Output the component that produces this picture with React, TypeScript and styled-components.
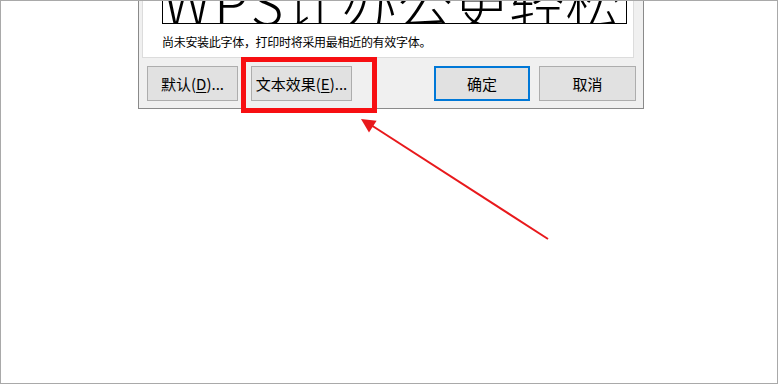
import React from "react";
import styled, { createGlobalStyle } from "styled-components";

const GlobalStyle = createGlobalStyle`
  html, body { margin: 0; padding: 0; background: #ffffff; }
  * { box-sizing: border-box; }
`;

const Page = styled.div`
  position: relative;
  width: 778px;
  height: 384px;
  border: 1px solid #a9a9a9;
  background: #ffffff;
  overflow: hidden;
  padding-left: 137px;
  font-family: "Noto Sans CJK SC", "Noto Sans", sans-serif;
`;

const Dialog = styled.div`
  width: 506px;
  background: #f0f0f0;
  border: 1px solid #8a8a8a;
  border-top: none;
  padding: 0 1px 7px 3px;
  display: flex;
  flex-direction: column;
`;

const FontPanel = styled.div`
  background: #ffffff;
  border: 1px solid #dcdcdc;
  border-top: none;
  width: 492px;
  padding: 0 6px 6px 19px;
`;

const Preview = styled.div`
  height: 23px;
  border: 1px solid #000000;
  border-top: none;
  overflow: hidden;
  display: flex;
  align-items: flex-end;
`;

const PreviewText = styled.span`
  font-family: "Noto Sans CJK SC", sans-serif;
  font-weight: 300;
  font-size: 56px;
  line-height: 56px;
  margin-bottom: -6px;
  white-space: pre;
  color: #000000;
`;

const Latin = styled.span`
  display: inline-block;
  width: 122px;
  letter-spacing: 3px;
`;

const Note = styled.div`
  margin-top: 9px;
  font-size: 12px;
  letter-spacing: -0.3px;
  line-height: 18px;
  color: #000000;
  white-space: nowrap;
`;

const ButtonRow = styled.div`
  display: flex;
  align-items: center;
  padding: 8px 6px 0 5px;
`;

const Spacer = styled.div`
  flex: 1;
`;

const Button = styled.div<{ $w: number; $primary?: boolean; $gap?: number }>`
  width: ${(p) => p.$w}px;
  height: 35px;
  margin-left: ${(p) => p.$gap ?? 0}px;
  background: #e1e1e1;
  border: ${(p) => (p.$primary ? "2px solid #0078d7" : "1px solid #adadad")};
  display: flex;
  align-items: center;
  justify-content: center;
  font-size: 15px;
  color: #000000;
  white-space: nowrap;
  u { text-decoration: underline; text-underline-offset: 2px; }
`;

const Highlight = styled.div`
  position: absolute;
  left: 240px;
  top: 56px;
  width: 136px;
  height: 56px;
  border: 5px solid #f70f12;
`;

const Overlay = styled.svg`
  position: absolute;
  left: -1px;
  top: -1px;
  width: 778px;
  height: 384px;
  pointer-events: none;
`;

export default function App() {
  return (
    <>
      <GlobalStyle />
      <Page>
        <Dialog>
          <FontPanel>
            <Preview>
              <PreviewText>
                <Latin>WPS</Latin>让办公更轻松
              </PreviewText>
            </Preview>
            <Note>尚未安装此字体，打印时将采用最相近的有效字体。</Note>
          </FontPanel>
          <ButtonRow>
            <Button $w={91}>
              默认(<u>D</u>)...
            </Button>
            <Button $w={101} $gap={13}>
              文本效果(<u>E</u>)...
            </Button>
            <Spacer />
            <Button $w={96} $primary>
              确定
            </Button>
            <Button $w={97} $gap={9}>
              取消
            </Button>
          </ButtonRow>
        </Dialog>
        <Highlight />
        <Overlay viewBox="0 0 778 384">
          <line x1="548" y1="239" x2="371" y2="125" stroke="#e8191c" strokeWidth="2" />
          <polygon points="361,119 376.6,120.7 369,132.5" fill="#e8191c" />
        </Overlay>
      </Page>
    </>
  );
}
